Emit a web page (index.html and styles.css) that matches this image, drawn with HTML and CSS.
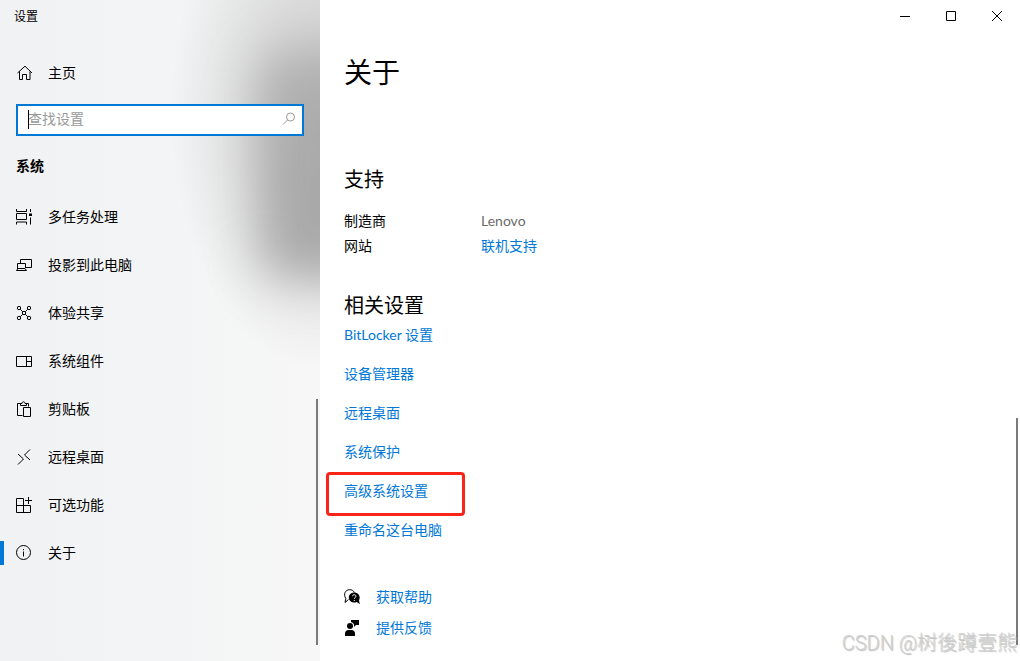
FILE: index.html
```html
<!DOCTYPE html>
<html lang="zh-CN">
<head>
<meta charset="utf-8">
<meta name="viewport" content="width=device-width, initial-scale=1">
<title>设置</title>
<link rel="stylesheet" href="styles.css">
</head>
<body>
<div class="window">
  <aside class="sidebar">
    <div class="app-title">设置</div>
    <a class="nav-link home" href="#home">
      <svg class="icon" viewBox="0 0 16 16"><path d="M1.500 8 9 1.200 16 8M3.500 6.500v8h3v-5h4v5h3.500v-8"/></svg>
      <span>主页</span>
    </a>
    <div class="search">
      <span class="caret"></span>
      <input class="search-input" type="text" aria-label="查找设置" placeholder="查找设置">
      <svg class="search-icon" viewBox="0 0 14 14"><circle cx="8.500" cy="5" r="4"/><path d="M5.500 8 1 12.500"/></svg>
    </div>
    <h2 class="group-title">系统</h2>
    <nav class="nav">
      <a class="nav-link" href="#multitask">
        <svg class="icon" viewBox="0 0 16 16"><path d="M.5 0v2.500h10V0M.5 15.500v-2.500h10v2.500M.5 4.500h10v6H.5zM14.500 0v3M14.500 8.500v7"/><path class="solid" d="M13 4.500h3v2.500h-3z"/></svg>
        <span>多任务处理</span>
      </a>
      <a class="nav-link" href="#project">
        <svg class="icon" viewBox="0 0 16 16"><path d="M4.500 6V2.500h11v8H10M1.500 12V6.500h8V11M.5 13.500l1.500-2h7l1.500 2z"/></svg>
        <span>投影到此电脑</span>
      </a>
      <a class="nav-link" href="#share">
        <svg class="icon" viewBox="0 0 16 16"><circle cx="3" cy="3" r="1.700"/><circle cx="13" cy="3" r="1.700"/><circle cx="3" cy="13" r="1.700"/><circle cx="13" cy="13" r="1.700"/><circle cx="8" cy="8" r="1.700"/><path d="m4.300 4.300 2.500 2.500M11.700 4.300 9.200 6.800M4.300 11.700l2.500-2.500M11.700 11.700 9.200 9.200"/></svg>
        <span>体验共享</span>
      </a>
      <a class="nav-link" href="#components">
        <svg class="icon" viewBox="0 0 16 16"><path d="M.5 3.500h15v10H.5zM10.500 3.500v10M10.500 8.500h5"/></svg>
        <span>系统组件</span>
      </a>
      <a class="nav-link" href="#clipboard">
        <svg class="icon" viewBox="0 0 16 16"><path d="M6.500 14.500h-5v-12h3M9.500 2.500h3v3M4.500 4.500v-2h1.500c0-2.300 3-2.300 3 0h1.500v2zM7.500 6.500h7v9h-7z"/></svg>
        <span>剪贴板</span>
      </a>
      <a class="nav-link" href="#remote">
        <svg class="icon" viewBox="0 0 16 16"><path d="m2 5 5.500 5L2 15.500M14 .5 8.500 6l5.500 5"/></svg>
        <span>远程桌面</span>
      </a>
      <a class="nav-link" href="#features">
        <svg class="icon" viewBox="0 0 16 16"><path d="M7.500 1.500h-7v14h14v-7H.5M7.500 1.500v14M12.500 0v7M9 3.500h7"/></svg>
        <span>可选功能</span>
      </a>
      <a class="nav-link current" href="#about" aria-current="page">
        <svg class="icon" viewBox="0 0 16 16"><circle cx="7.500" cy="7.500" r="7"/><path d="M7.500 6.500v5M7.500 4v1.200"/></svg>
        <span>关于</span>
      </a>
    </nav>
    <div class="scrollbar scrollbar-side"></div>
  </aside>

  <main class="content">
    <div class="window-controls">
      <button class="control" type="button" aria-label="最小化"><svg viewBox="0 0 10 10"><path d="M0 5.500h10"/></svg></button>
      <button class="control" type="button" aria-label="最大化"><svg viewBox="0 0 10 10"><path d="M.5.5h9v9h-9z"/></svg></button>
      <button class="control" type="button" aria-label="关闭"><svg viewBox="0 0 10 10"><path d="m0 0 10 10M10 0 0 10"/></svg></button>
    </div>
    <div class="page">
      <h1 class="page-title">关于</h1>
      <section class="support">
        <h2 class="section-title">支持</h2>
        <dl class="facts">
          <dt>制造商</dt><dd>Lenovo</dd>
          <dt>网站</dt><dd><a href="#support">联机支持</a></dd>
        </dl>
      </section>
      <section class="related">
        <h2 class="section-title">相关设置</h2>
        <ul class="links">
          <li><a href="#bitlocker">BitLocker 设置</a></li>
          <li><a href="#devices">设备管理器</a></li>
          <li><a href="#desktop">远程桌面</a></li>
          <li><a href="#protection">系统保护</a></li>
          <li><a class="marked" href="#advanced">高级系统设置</a></li>
          <li><a href="#rename">重命名这台电脑</a></li>
        </ul>
      </section>
      <div class="help">
        <a class="help-link" href="#help">
          <svg class="help-icon" viewBox="0 0 16 16"><path class="line" d="M4.500 10.500 1 13.500l.8-4C-1 5 1.500.7 5.500.7c2.500 0 4 1 4.800 2.800"/><path d="M10.200 3.500c-3.100 0-5.400 2.200-5.400 5s2.300 5 5.400 5c1 0 1.900-.2 2.600-.6l3 2.300-.8-4c.5-.8.7-1.700.7-2.700 0-2.800-2.400-5-5.500-5z"/><path class="mark" d="M8.500 7.200c0-2 3.400-1.900 3.400.1 0 1.200-1.600 1.300-1.600 2.600M10.300 11v1.100"/></svg>
          <span>获取帮助</span>
        </a>
        <a class="help-link" href="#feedback">
          <svg class="help-icon" viewBox="0 0 16 16"><circle cx="6" cy="6" r="3"/><path d="M1 16v-2.500C1 11.300 2.500 10 4.500 10h3c2 0 3.500 1.300 3.500 3.500V16zM7 0h8v5h-3l-2 2V4.500C9.500 3.300 8.500 2.500 7 2z"/></svg>
          <span>提供反馈</span>
        </a>
      </div>
    </div>
    <div class="scrollbar scrollbar-main"></div>
    <div class="watermark">CSDN @树後蹲壹熊</div>
  </main>
</div>
</body>
</html>
```
FILE: styles.css
```css
* {
  box-sizing: border-box;
}

body {
  margin: 0;
  background: #fff;
  color: #000;
  font: 14px/20px Lato, "Noto Sans CJK SC", sans-serif;
}

h1, h2, dl, dd, ul {
  margin: 0;
  padding: 0;
  font-weight: 400;
}

a {
  color: #0078d7;
  text-decoration: none;
}

.window {
  display: flex;
  min-height: 100vh;
}

/* Sidebar */
.sidebar {
  position: relative;
  flex: 0 0 320px;
  overflow: hidden;
  isolation: isolate;
  background:
    radial-gradient(ellipse 150px 260px at 100% 110px, #0003, #0000),
    linear-gradient(90deg, #f1f2f4, #f3f4f5 50%, #f7f7f7);
}

.sidebar::before {
  content: "";
  position: absolute;
  z-index: -1;
  top: 52px;
  right: -120px;
  width: 180px;
  height: 226px;
  border-radius: 32px;
  background: linear-gradient(#b2b2b2, #a9a9a9 50%);
  filter: blur(24px);
}

.app-title {
  padding: 0 14px;
  font-size: 12px;
  line-height: 34px;
}

.nav-link {
  position: relative;
  display: flex;
  align-items: center;
  gap: 16px;
  height: 48px;
  padding: 0 16px;
  color: #000;
}

.home {
  margin-top: 15px;
}

.icon {
  width: 16px;
  height: 16px;
  fill: none;
  stroke: #000;
  stroke-width: 1;
}

.icon .solid {
  fill: #000;
  stroke: none;
}

.search {
  position: relative;
  display: flex;
  align-items: center;
  height: 32px;
  margin: 7px 16px 0;
  padding: 0 6px 2px 10px;
  border: 2px solid #0078d7;
  background: #fff;
}

.caret {
  position: absolute;
  left: 10px;
  width: 1px;
  height: 19px;
  background: #000;
}

.search-input {
  flex: 1;
  min-width: 0;
  padding: 0;
  border: 0;
  outline: 0;
  background: none;
  font: inherit;
}

.search-input::placeholder {
  color: #999;
}

.search-icon {
  width: 14px;
  height: 14px;
  fill: none;
  stroke: #999;
}

.group-title {
  margin: 20px 16px 17px;
  font-size: 14px;
  font-weight: 700;
}

.current::before {
  content: "";
  position: absolute;
  left: 0;
  width: 4px;
  height: 24px;
  background: #0078d7;
}

.scrollbar {
  position: absolute;
  right: 2px;
  bottom: 16px;
  width: 2px;
  background: #7a7a7a;
}

.scrollbar-side {
  height: 246px;
}

.scrollbar-main {
  height: 227px;
}

/* Content */
.content {
  position: relative;
  flex: 1;
  min-width: 0;
}

.window-controls {
  display: flex;
  justify-content: flex-end;
}

.control {
  display: grid;
  place-items: center;
  width: 46px;
  height: 32px;
  padding: 0;
  border: 0;
  background: none;
}

.control svg {
  width: 10px;
  height: 10px;
  fill: none;
  stroke: #000;
}

.page {
  padding: 20px 24px 8px;
}

.page-title {
  font-size: 28px;
  line-height: 40px;
}

.support {
  margin-top: 73px;
}

.section-title {
  font-size: 20px;
  line-height: 28px;
}

.facts {
  display: grid;
  grid-template-columns: 137px 1fr;
  margin-top: 15px;
  line-height: 25px;
}

.facts dd {
  color: #6b6b6b;
}

.related {
  margin-top: 33px;
}

.links {
  display: grid;
  gap: 19px;
  margin-top: 6px;
  list-style: none;
}

.marked {
  position: relative;
}

.marked::after {
  content: "";
  position: absolute;
  top: -10px;
  right: -37px;
  bottom: -17px;
  left: -18px;
  border: 3px solid #fb2418;
  border-radius: 4px;
}

.help {
  margin-top: 41px;
  line-height: 31px;
}

.help-link {
  display: flex;
  align-items: center;
  gap: 16px;
}

.help-icon {
  width: 16px;
  height: 16px;
  fill: #000;
}

.help-icon .line {
  fill: none;
  stroke: #000;
}

.help-icon .mark {
  fill: none;
  stroke: #fff;
}

.watermark {
  position: absolute;
  right: 3px;
  bottom: 4px;
  color: #d0d0d0;
  font: 300 20px/28px Roboto, "Noto Sans CJK SC", sans-serif;
  text-shadow: 1px 1px 1px #bbb;
  white-space: nowrap;
}
```
